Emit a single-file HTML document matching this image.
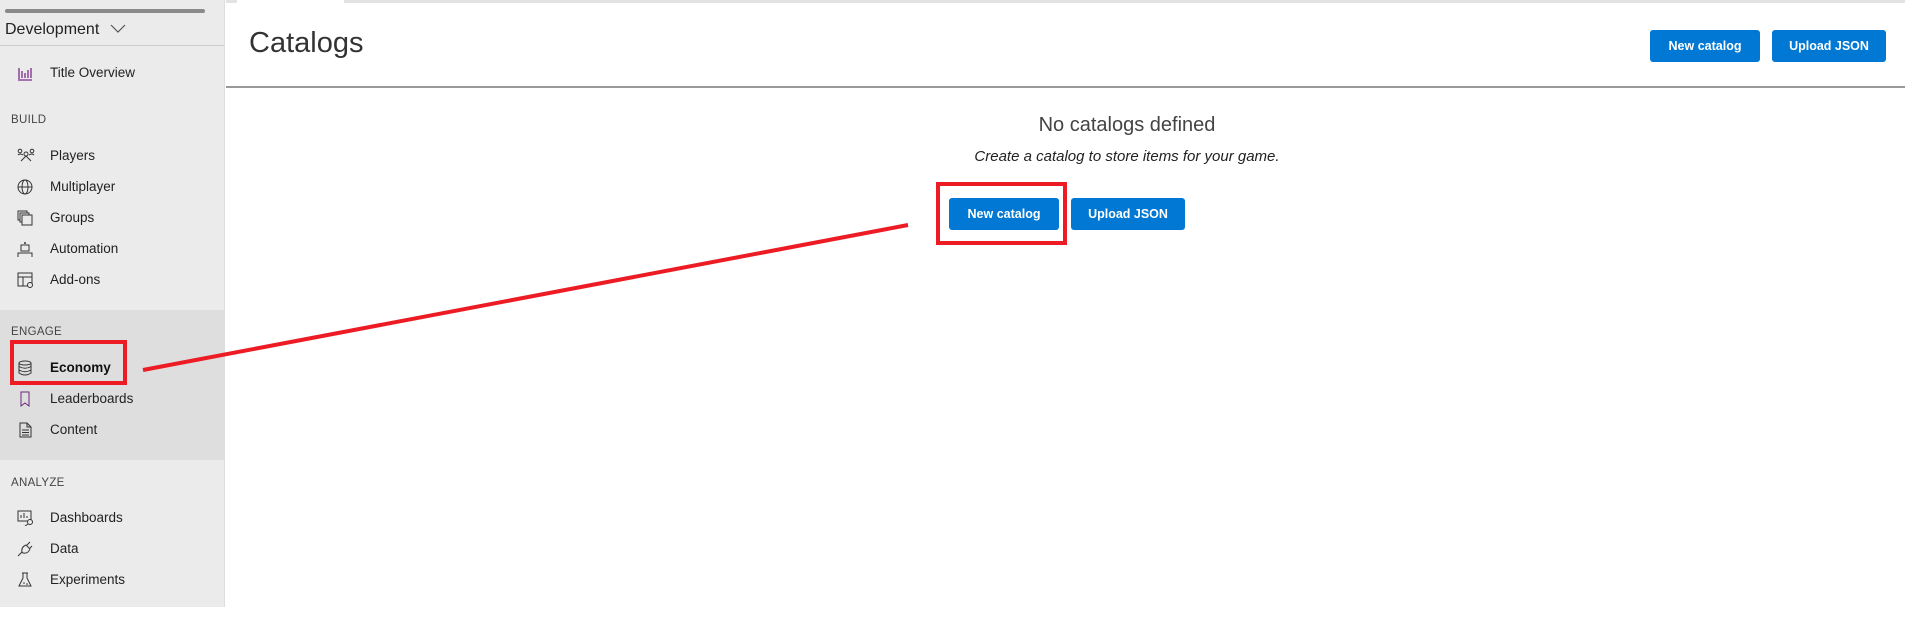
<!DOCTYPE html>
<html><head><meta charset="utf-8"><style>
*{margin:0;padding:0;box-sizing:border-box}
body{width:1905px;height:623px;background:#fff;font-family:"Liberation Sans",sans-serif;position:relative;overflow:hidden;color:#222}
#side{position:absolute;left:0;top:0;width:225px;height:607px;background:#ebebeb;border-right:1px solid #ddd}
.abs{position:absolute}
.item{position:absolute;left:0;width:224px;height:28px;font-size:13.5px;color:#222}
.item span{position:absolute;left:50px;top:6px}
.item svg{position:absolute;left:17px;top:6px}
.sec{position:absolute;left:11px;font-size:11.5px;color:#444;letter-spacing:.3px}
.btn{position:absolute;height:32px;background:#0078d4;border-radius:3px;color:#fff;font-weight:bold;font-size:12.5px;text-align:center;line-height:32px}
</style></head><body>
<div id="side">
  <div class="abs" style="left:5px;top:9px;width:200px;height:4px;background:#8a8a8a;border-radius:2px"></div>
  <div class="abs" style="left:5px;top:21px;font-size:16px;color:#222">Development</div>
  <svg class="abs" style="left:110px;top:24px" width="16" height="10"><path d="M1 1 L8 8 L15 1" fill="none" stroke="#555" stroke-width="1.2"/></svg>
  <div class="abs" style="left:0;top:45px;width:224px;height:1px;background:#ccc"></div>
  <div class="item" style="top:59px"><svg width="16" height="16"><path d="M1 15H15M2 3V14M5 6V13M8 8V13M11 5V13M14 3V13" stroke="#7a2a8a" stroke-width="1.3" fill="none"/></svg><span>Title Overview</span></div>
  <div class="sec" style="top:114px">BUILD</div>
  <div class="item" style="top:142px"><svg width="18" height="16"><circle cx="3" cy="3" r="1.8" fill="none" stroke="#333"/><circle cx="15" cy="3" r="1.8" fill="none" stroke="#333"/><circle cx="9" cy="6" r="2" fill="none" stroke="#333"/><path d="M4 13 L9 8 L14 13 M1 7 Q3 5 6 7 M12 7 Q15 5 17 7" fill="none" stroke="#333"/></svg><span>Players</span></div>
  <div class="item" style="top:173px"><svg width="16" height="16"><circle cx="8" cy="8" r="7" fill="none" stroke="#333"/><ellipse cx="8" cy="8" rx="3" ry="7" fill="none" stroke="#333"/><path d="M1 8H15" stroke="#333"/></svg><span>Multiplayer</span></div>
  <div class="item" style="top:204px"><svg width="16" height="16"><rect x="1" y="1" width="9" height="9" fill="none" stroke="#333"/><rect x="3" y="3" width="9" height="9" fill="#ebebeb" stroke="#333"/><rect x="5" y="5" width="10" height="10" fill="#ebebeb" stroke="#333"/></svg><span>Groups</span></div>
  <div class="item" style="top:235px"><svg width="16" height="16"><circle cx="8" cy="2" r="1" fill="#333"/><rect x="4" y="4" width="8" height="6" fill="none" stroke="#333"/><path d="M1 16V12H15V16" fill="none" stroke="#333"/></svg><span>Automation</span></div>
  <div class="item" style="top:266px"><svg width="17" height="16"><rect x="1" y="1" width="14" height="13" fill="none" stroke="#333"/><path d="M1 5H15M6 5V14" stroke="#333"/><circle cx="13" cy="13" r="2.5" fill="#ebebeb" stroke="#333"/></svg><span>Add-ons</span></div>
  <div class="abs" style="left:0;top:310px;width:224px;height:150px;background:#dedede"></div>
  <div class="sec" style="top:326px">ENGAGE</div>
  <div class="item" style="top:354px"><svg width="16" height="16"><ellipse cx="8" cy="3" rx="6" ry="2" fill="none" stroke="#333"/><path d="M2 3V13Q8 17 14 13V3M2 6.5Q8 10 14 6.5M2 10Q8 13.5 14 10" fill="none" stroke="#333"/></svg><span style="font-weight:bold;color:#111">Economy</span></div>
  <div class="item" style="top:385px"><svg width="16" height="16"><path d="M4 1H12V15L8 12L4 15Z" fill="none" stroke="#6a2a7a"/></svg><span>Leaderboards</span></div>
  <div class="item" style="top:416px"><svg width="16" height="16"><path d="M3 1H10L14 5V15H3Z M10 1V5H14 M5 8H12M5 10.5H12M5 13H12" fill="none" stroke="#333"/></svg><span>Content</span></div>
  <div class="sec" style="top:477px">ANALYZE</div>
  <div class="item" style="top:504px"><svg width="17" height="16"><rect x="1" y="1" width="13" height="10" fill="none" stroke="#333"/><path d="M4 8V5M7 8V3M10 8V6" stroke="#333"/><circle cx="13" cy="12" r="2.5" fill="#ebebeb" stroke="#333"/><path d="M11 14L8 16" stroke="#333"/></svg><span>Dashboards</span></div>
  <div class="item" style="top:535px"><svg width="16" height="16"><path d="M1 15L5 11M5 11Q4 6 9 4L13 8Q11 13 6 12Z M10 4L13 1M13 7L15 5" fill="none" stroke="#333"/></svg><span>Data</span></div>
  <div class="item" style="top:566px"><svg width="16" height="16"><path d="M6 1V6L2 14H14L10 6V1M5 1H11" fill="none" stroke="#333"/><circle cx="7" cy="11" r=".8" fill="#333"/><circle cx="10" cy="12" r=".8" fill="#333"/></svg><span>Experiments</span></div>
</div>
<div class="abs" style="left:226px;top:0;width:1679px;height:3px;background:#e3e3e3"></div>
<div class="abs" style="left:237px;top:0;width:107px;height:3px;background:#fff"></div>
<div class="abs" style="left:249px;top:27px;font-size:29px;color:#333">Catalogs</div>
<div class="btn" style="left:1650px;top:30px;width:110px">New catalog</div>
<div class="btn" style="left:1772px;top:30px;width:114px">Upload JSON</div>
<div class="abs" style="left:226px;top:86px;width:1679px;height:2px;background:#999"></div>
<div class="abs" style="left:900px;top:114px;width:454px;text-align:center;font-size:20px;color:#444">No catalogs defined</div>
<div class="abs" style="left:850px;top:148px;width:554px;text-align:center;font-size:15px;font-style:italic;color:#222">Create a catalog to store items for your game.</div>
<div class="btn" style="left:949px;top:198px;width:110px">New catalog</div>
<div class="btn" style="left:1071px;top:198px;width:114px">Upload JSON</div>
<div class="abs" style="left:936px;top:182px;width:131px;height:63px;border:4px solid #ed1c24"></div>
<div class="abs" style="left:10px;top:340px;width:117px;height:45px;border:4px solid #ed1c24"></div>
<svg class="abs" style="left:0;top:0" width="1905" height="623"><line x1="143" y1="370" x2="908" y2="225" stroke="#ed1c24" stroke-width="4"/></svg>
</body></html>
